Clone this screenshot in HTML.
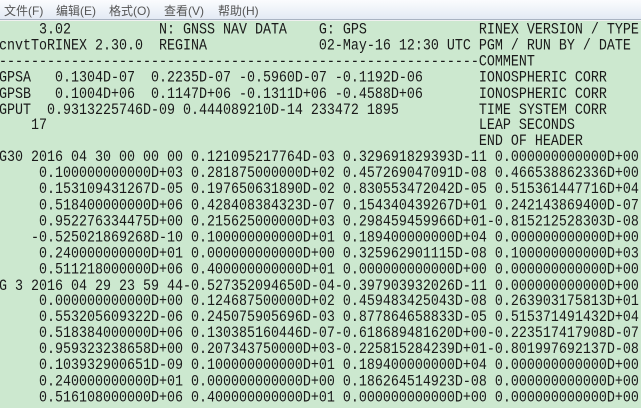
<!DOCTYPE html>
<html><head><meta charset="utf-8"><style>
html,body{margin:0;padding:0;width:641px;height:408px;overflow:hidden;background:#cce8cf;}
#menu{position:absolute;left:0;top:0;width:641px;height:19px;background:linear-gradient(#fbfcfe,#e3eaf4);border-bottom:1px solid #a9b3c2;font-family:"Liberation Sans","Noto Sans CJK SC",sans-serif;font-size:12px;color:#555;}
#menu span{position:absolute;top:2px;}
#sep{position:absolute;left:0;top:20px;width:641px;height:1px;background:#f0f0f0;}
pre{position:absolute;left:-1px;top:23px;margin:0;font-family:"Liberation Mono",monospace;font-size:13.33px;line-height:13.913px;color:#1a1a1a;white-space:pre;transform:scaleY(1.15);transform-origin:0 0;}
</style></head><body>
<div id="menu"><span style="left:4px">文件(F)</span><span style="left:56px">编辑(E)</span><span style="left:109px">格式(O)</span><span style="left:164px">查看(V)</span><span style="left:218px">帮助(H)</span></div>
<div id="sep"></div>
<pre>     3.02           N: GNSS NAV DATA    G: GPS              RINEX VERSION / TYPE
cnvtToRINEX 2.30.0  REGINA              02-May-16 12:30 UTC PGM / RUN BY / DATE
------------------------------------------------------------COMMENT
GPSA   0.1304D-07  0.2235D-07 -0.5960D-07 -0.1192D-06       IONOSPHERIC CORR
GPSB   0.1004D+06  0.1147D+06 -0.1311D+06 -0.4588D+06       IONOSPHERIC CORR
GPUT  0.9313225746D-09 0.444089210D-14 233472 1895          TIME SYSTEM CORR
    17                                                      LEAP SECONDS
                                                            END OF HEADER
G30 2016 04 30 00 00 00 0.121095217764D-03 0.329691829393D-11 0.000000000000D+00
     0.100000000000D+03 0.281875000000D+02 0.457269047091D-08 0.466538862336D+00
     0.153109431267D-05 0.197650631890D-02 0.830553472042D-05 0.515361447716D+04
     0.518400000000D+06 0.428408384323D-07 0.154340439267D+01 0.242143869400D-07
     0.952276334475D+00 0.215625000000D+03 0.298459459966D+01-0.815212528303D-08
    -0.525021869268D-10 0.100000000000D+01 0.189400000000D+04 0.000000000000D+00
     0.240000000000D+01 0.000000000000D+00 0.325962901115D-08 0.100000000000D+03
     0.511218000000D+06 0.400000000000D+01 0.000000000000D+00 0.000000000000D+00
G 3 2016 04 29 23 59 44-0.527352094650D-04-0.397903932026D-11 0.000000000000D+00
     0.000000000000D+00 0.124687500000D+02 0.459483425043D-08 0.263903175813D+01
     0.553205609322D-06 0.245075905696D-03 0.877864658833D-05 0.515371491432D+04
     0.518384000000D+06 0.130385160446D-07-0.618689481620D+00-0.223517417908D-07
     0.959323238658D+00 0.207343750000D+03-0.225815284239D+01-0.801997692137D-08
     0.103932900651D-09 0.100000000000D+01 0.189400000000D+04 0.000000000000D+00
     0.240000000000D+01 0.000000000000D+00 0.186264514923D-08 0.000000000000D+00
     0.516108000000D+06 0.400000000000D+01 0.000000000000D+00 0.000000000000D+00</pre>
</body></html>
